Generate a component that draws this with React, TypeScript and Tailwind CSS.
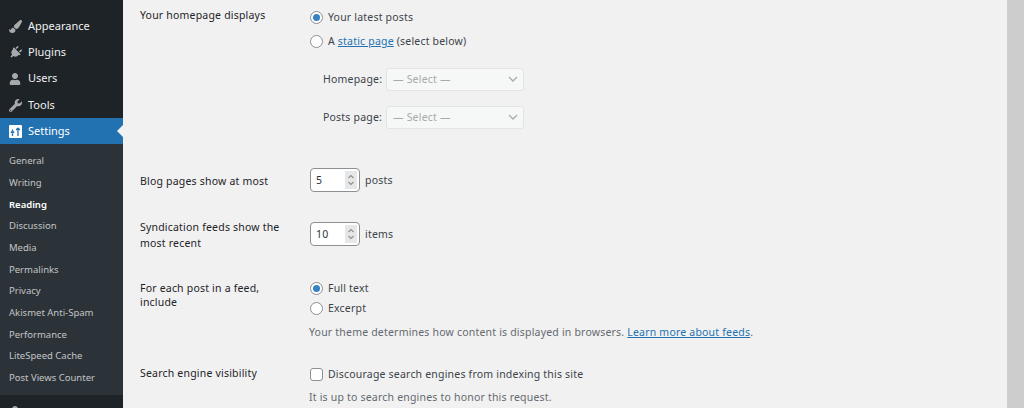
import React from "react";
import { FaPaintBrush, FaPlug, FaUser, FaWrench } from "react-icons/fa";

const font = "font-['Noto_Sans','Open_Sans',sans-serif]";

function SettingsIcon() {
  return (
    <svg width="13" height="13" viewBox="0 0 13 13" className="shrink-0">
      <rect width="13" height="13" rx="1" fill="#fff" />
      <path d="M3.5 4.5V6M3.5 8.5V11M9 11V3M9 3L7.2 5M9 3L10.8 5" stroke="#2271b1" strokeWidth="1.3" fill="none" />
      <rect x="1.8" y="6.2" width="3.4" height="2" fill="#2271b1" />
    </svg>
  );
}

function MenuItem({ icon, label }: { icon: React.ReactNode; label: string }) {
  return (
    <div className="flex h-[26.3px] shrink-0 items-center text-[11px] text-[#f0f0f1]">
      <span className="flex w-[28px] shrink-0 items-center justify-center pl-[2px] text-[#a7aaad]">{icon}</span>
      <span>{label}</span>
    </div>
  );
}

function Radio({ checked }: { checked?: boolean }) {
  return (
    <span className="flex h-[13px] w-[13px] shrink-0 items-center justify-center rounded-full border border-[#8c8f94] bg-white">
      {checked && <span className="h-[7px] w-[7px] rounded-full bg-[#3582c4]" />}
    </span>
  );
}

function Option({ checked, children, className }: { checked?: boolean; children: React.ReactNode; className?: string }) {
  return (
    <div className={`flex h-[20px] items-center gap-[5px] ${className ?? ""}`}>
      <Radio checked={checked} />
      <span>{children}</span>
    </div>
  );
}

function SelectRow({ label }: { label: string }) {
  return (
    <div className="flex h-[24px] items-center">
      <span className="w-[76px] shrink-0 pl-[13px] text-[#3c434a]">{label}</span>
      <div className="flex h-[23px] w-[138px] items-center justify-between rounded-[3px] border border-[#e2e4e7] bg-[#f6f7f7] pl-[6px] pr-[4px] text-[#a7aaad]">
        <span>— Select —</span>
        <svg width="12" height="12" viewBox="0 0 12 12" fill="none">
          <path d="M2 4l4 4 4-4" stroke="#a7aaad" strokeWidth="1.3" />
        </svg>
      </div>
    </div>
  );
}

function NumberField({ value, unit }: { value: string; unit: string }) {
  return (
    <div className="flex items-center gap-[5px]">
      <div className="flex h-[24px] w-[50px] items-center justify-between rounded-[4px] border border-[#8c8f94] bg-white pl-[5px] pr-[2px] text-[#2c3338]">
        <span>{value}</span>
        <svg width="12" height="18" viewBox="0 0 12 18">
          <rect width="12" height="18" fill="#e6e7e8" />
          <path d="M3.5 7L6 4.5 8.5 7M3.5 11L6 13.5 8.5 11" stroke="#8c8f94" strokeWidth="1.1" fill="none" />
        </svg>
      </div>
      <span>{unit}</span>
    </div>
  );
}

function Row({ label, children, className }: { label: React.ReactNode; children: React.ReactNode; className?: string }) {
  return (
    <div className={`flex items-start ${className ?? ""}`}>
      <div className="w-[170px] shrink-0 pr-[20px] leading-[16px] text-[#1d2327]">{label}</div>
      <div className="min-w-0 flex-1">{children}</div>
    </div>
  );
}

export default function App() {
  const subs = ["General", "Writing", "Reading", "Discussion", "Media", "Permalinks", "Privacy", "Akismet Anti-Spam", "Performance", "LiteSpeed Cache", "Post Views Counter"];
  return (
    <div className={`flex h-[408px] w-[1024px] overflow-hidden bg-[#f1f1f1] ${font}`}>
      <aside className="flex w-[123px] shrink-0 flex-col overflow-hidden bg-[#1d2327] pt-[13px]">
        <MenuItem icon={<FaPaintBrush size={13} />} label="Appearance" />
        <MenuItem icon={<FaPlug size={13} className="rotate-45" />} label="Plugins" />
        <MenuItem icon={<FaUser size={12} />} label="Users" />
        <MenuItem icon={<FaWrench size={13} />} label="Tools" />
        <div className="relative flex h-[26.3px] shrink-0 items-center bg-[#2271b1] text-[11px] text-white">
          <span className="flex w-[28px] shrink-0 items-center justify-center pl-[2px]">
            <SettingsIcon />
          </span>
          <span>Settings</span>
          <span className="absolute right-0 top-[7px] h-0 w-0 border-y-[6px] border-r-[6px] border-y-transparent border-r-[#f1f1f1]" />
        </div>
        <div className="flex shrink-0 flex-col bg-[#2c3338] py-[6px]">
          {subs.map((s) => (
            <div
              key={s}
              className={`flex h-[21.7px] items-center pl-[9px] text-[9.5px] ${s === "Reading" ? "font-semibold text-white" : "text-[#c3c4c7]"}`}
            >
              {s}
            </div>
          ))}
        </div>
        <div className="mt-[4px]">
          <MenuItem icon={<FaUser size={12} />} label="" />
        </div>
      </aside>
      <main className="min-w-0 flex-1 pl-[17px] pt-[7px] text-[10.5px] leading-[16px] tracking-[0.2px] text-[#3c434a]">
        <Row label="Your homepage displays">
          <Option checked>Your latest posts</Option>
          <Option className="mt-[4px]">
            A <a className="text-[#2271b1] underline">static page</a> (select below)
          </Option>
          <div className="mt-[16px] flex flex-col gap-[14px]">
            <SelectRow label="Homepage:" />
            <SelectRow label="Posts page:" />
          </div>
        </Row>
        <Row label={<div className="pt-[5px]">Blog pages show at most</div>} className="mt-[39px]">
          <NumberField value="5" unit="posts" />
        </Row>
        <Row label="Syndication feeds show the most recent" className="mt-[27px]">
          <div className="mt-[3px]">
            <NumberField value="10" unit="items" />
          </div>
        </Row>
        <Row label={<div className="pt-[3px] leading-[14px]">For each post in a feed, include</div>} className="mt-[27px]">
          <Option checked>Full text</Option>
          <Option>Excerpt</Option>
          <p className="-ml-[1px] mt-[6px] whitespace-nowrap text-[#646970]">
            Your theme determines how content is displayed in browsers. <a className="text-[#2271b1] underline">Learn more about feeds</a>.
          </p>
        </Row>
        <Row label={<div className="pt-[1px]">Search engine visibility</div>} className="mt-[24px]">
          <div className="flex h-[20px] items-center gap-[5px]">
            <span className="h-[13px] w-[13px] shrink-0 rounded-[3px] border border-[#8c8f94] bg-white" />
            <span>Discourage search engines from indexing this site</span>
          </div>
          <p className="-ml-[1px] mt-[5px] text-[#646970]">It is up to search engines to honor this request.</p>
        </Row>
      </main>
      <div className="w-[17px] shrink-0 bg-[#cdcdcd]" />
    </div>
  );
}
